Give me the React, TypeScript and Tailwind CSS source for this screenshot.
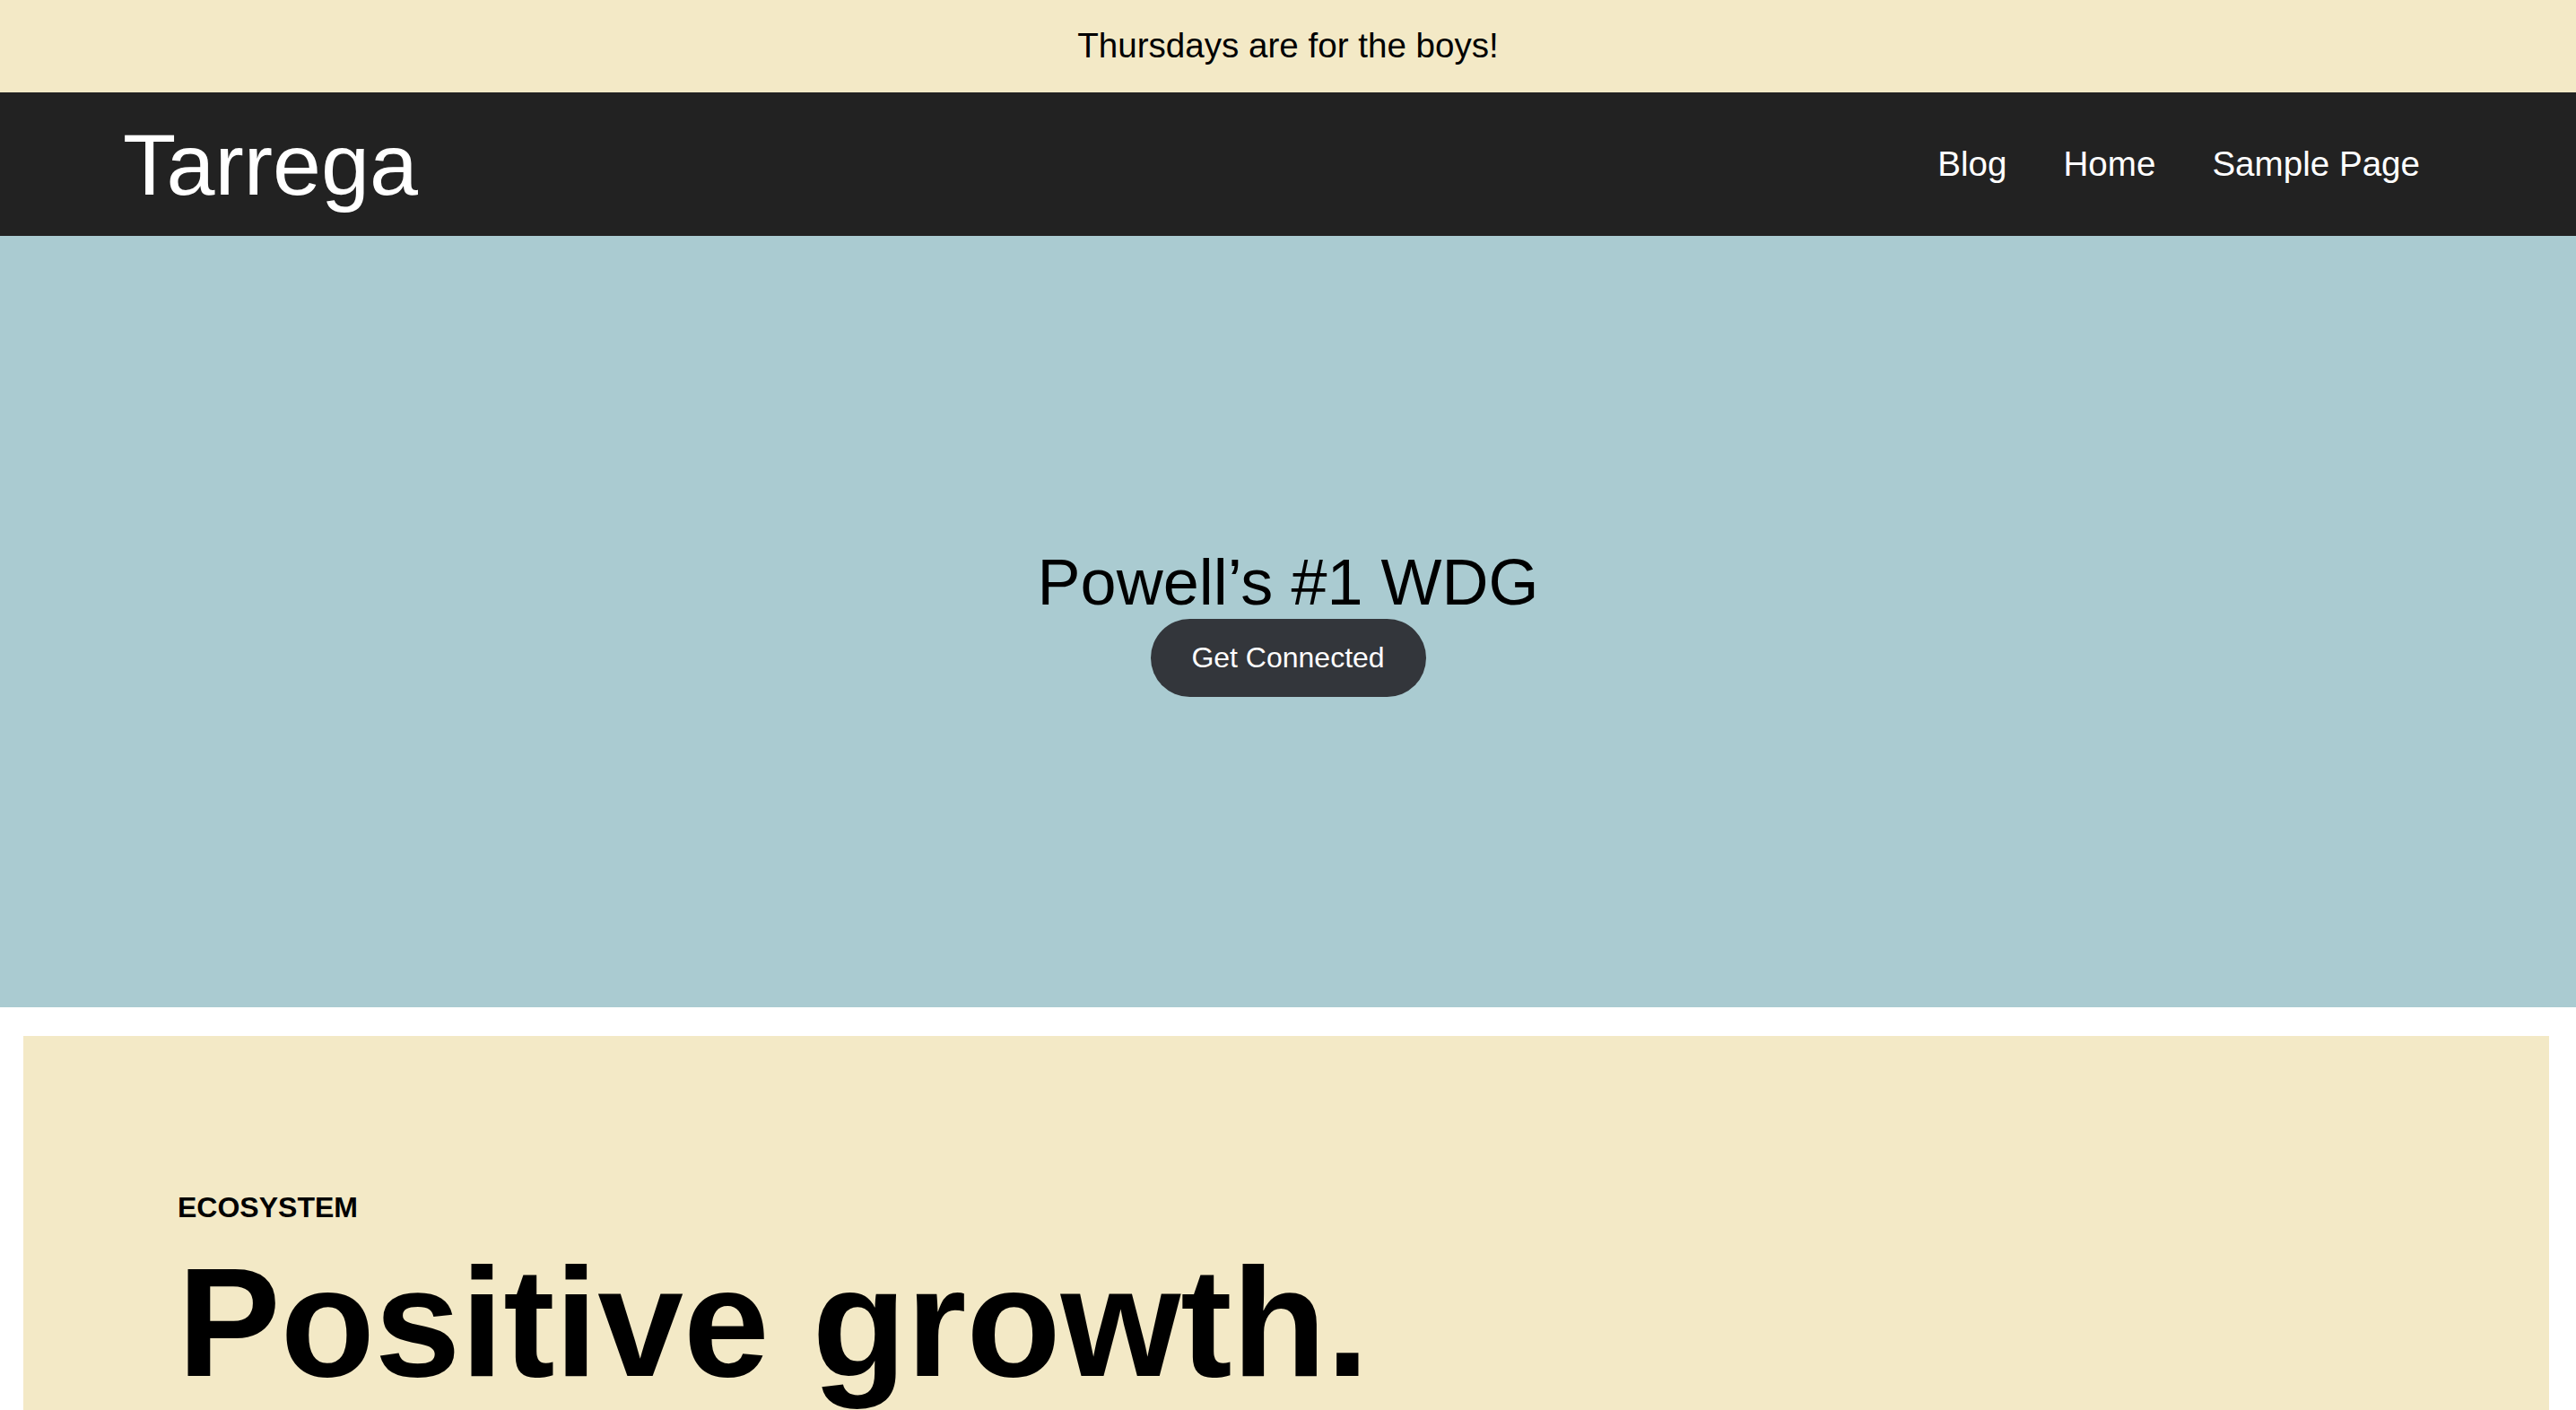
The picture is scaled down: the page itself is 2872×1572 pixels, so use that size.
import React from 'react';

const links = ['Blog', 'Home', 'Sample Page'];

const App = () => {
  return (
    <div className="min-h-screen bg-white text-black font-['Liberation_Sans',Arial,sans-serif]">
      <div className="h-[103px] bg-[#f3e9c6] flex items-center justify-center">
        <p className="text-[38.6px] leading-none">Thursdays are for the boys!</p>
      </div>

      <header className="h-[160px] bg-[#222222] flex items-center justify-between pl-[137px] pr-[174px]">
        <a href="#" className="text-white text-[97px] leading-none">
          Tarrega
        </a>
        <nav className="flex items-center gap-[63px]">
          {links.map((l) => (
            <a key={l} href="#" className="text-white text-[38.6px] leading-none">
              {l}
            </a>
          ))}
        </nav>
      </header>

      <section className="h-[860px] bg-[#aacbd1] flex flex-col items-center justify-center">
        <h1 className="text-[72px] leading-[1.12]">Powell’s #1 WDG</h1>
        <button className="w-[307px] h-[87px] rounded-full bg-[#33363b] text-white text-[32px]">
          Get Connected
        </button>
      </section>

      <div className="h-[32px]"></div>

      <section className="ml-[26px] mr-[30px] bg-[#f3e9c6] pt-[173px] pb-[200px] px-[172px]">
        <p className="text-[32px] font-bold leading-[1.15]">ECOSYSTEM</p>
        <h2 className="mt-[23px] text-[172px] font-bold leading-none">
          Positive growth.
        </h2>
      </section>
    </div>
  );
};

export default App;
